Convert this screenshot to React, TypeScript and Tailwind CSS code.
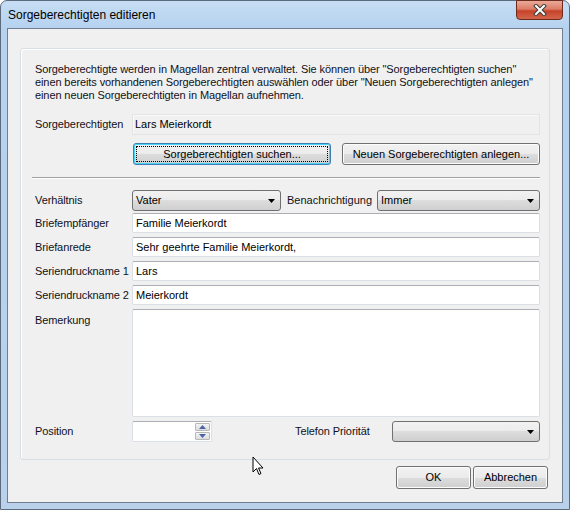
import React from 'react';

const font = { fontFamily: '"Liberation Sans", Arial, sans-serif' };

const Select: React.FC<{ value?: string; className?: string }> = ({ value, className = '' }) => (
  <div
    className={`relative h-[21px] flex items-center rounded-[3px] border border-[#707070] bg-[linear-gradient(to_bottom,#f2f2f2_0%,#ebebeb_50%,#dddddd_50%,#cfcfcf_100%)] pl-[3px] ${className}`}
  >
    <span className="text-[11px] text-black leading-none">{value}</span>
    <svg width="7" height="4" viewBox="0 0 7 4" className="absolute right-[5px] top-[8px]">
      <path d="M0 0h7L3.5 4z" fill="#000" />
    </svg>
  </div>
);

const TextBox: React.FC<{ value?: string; className?: string }> = ({ value, className = '' }) => (
  <div
    className={`h-[20px] flex items-center rounded-[2px] border border-[#dbdfe6] border-t-[#abadb3] bg-white pl-[3px] text-[11px] text-black ${className}`}
  >
    {value}
  </div>
);

const Button: React.FC<{ children: React.ReactNode; focused?: boolean; className?: string }> = ({
  children,
  focused,
  className = '',
}) => (
  <div
    className={`relative flex items-center justify-center rounded-[3px] border text-[11px] text-black bg-[linear-gradient(to_bottom,#f2f2f2_0%,#ebebeb_50%,#dddddd_50%,#cfcfcf_100%)] ${
      focused ? 'border-[#3c7fb1] shadow-[inset_0_0_0_1px_#48d2f9]' : 'border-[#707070] shadow-[inset_0_0_0_1px_#fcfcfc]'
    } ${className}`}
  >
    {focused && <span className="absolute inset-[2px] border border-dotted border-black" />}
    <span className="relative">{children}</span>
  </div>
);

const Label: React.FC<{ children: React.ReactNode; className?: string }> = ({ children, className = '' }) => (
  <div className={`w-[97px] shrink-0 text-[11px] text-[#101020] whitespace-nowrap tracking-[-0.1px] ${className}`}>{children}</div>
);

export default function App() {
  return (
    <div style={font} className="w-[570px] h-[510px] bg-white">
      <div className="relative w-[570px] h-[510px] rounded-t-[7px] border border-[#5b6b7d] bg-[linear-gradient(to_bottom,#c6ddf4_0px,#b6d2ef_28px,#b9d1ea_100%)] flex flex-col">
        {/* title bar */}
        <div className="h-[27px] flex items-center pl-[7px] text-[12px] text-black">Sorgeberechtigten editieren</div>
        <div className="absolute top-[-1px] right-[6px] w-[47px] h-[20px] rounded-b-[4px] border border-[#6e2a1d] bg-[linear-gradient(to_bottom,#e9aa99_0%,#dd7d66_45%,#c7432a_55%,#d2654a_100%)] flex items-center justify-center">
          <svg width="14" height="12" viewBox="0 0 14 12">
            <path d="M3 2l8 8M11 2l-8 8" stroke="#3b3b3b" strokeWidth="4" strokeLinecap="square" />
            <path d="M3 2l8 8M11 2l-8 8" stroke="#fff" strokeWidth="2" strokeLinecap="square" />
          </svg>
        </div>

        {/* client */}
        <div className="mx-[6px] h-[475px] border border-[#6f7f8f] bg-[#f0f0f0] flex flex-col pt-[19px] px-[12px]">
          <div className="h-[412px] rounded-[3px] border border-[#d5dfe5] shadow-[inset_1px_1px_0_#ffffff] flex flex-col pt-[14px] pl-[14px] pr-[9px]">
            <p className="text-[11px] leading-[13px] text-[#101020] whitespace-nowrap tracking-[-0.1px]">
              Sorgeberechtigte werden in Magellan zentral verwaltet. Sie können über "Sorgeberechtigten suchen"
              <br />
              einen bereits vorhandenen Sorgeberechtigten auswählen oder über "Neuen Sorgeberechtigten anlegen"
              <br />
              einen neuen Sorgeberechtigten in Magellan aufnehmen.
            </p>

            <div className="mt-[12px] flex items-center">
              <Label>Sorgeberechtigten</Label>
              <div className="flex-1 h-[21px] flex items-center border border-[#e3e3e3] shadow-[inset_1px_1px_0_#fafafa] pl-[2px] text-[11px] text-black">
                Lars Meierkordt
              </div>
            </div>

            <div className="mt-[8px] flex gap-[11px] pl-[98px]">
              <Button focused className="w-[198px] h-[22px]">Sorgeberechtigten suchen...</Button>
              <Button className="w-[198px] h-[22px]">Neuen Sorgeberechtigten anlegen...</Button>
            </div>

            <div className="mt-[12px] -ml-[3px] border-t border-[#a0a0a0] border-b border-b-white" />

            <div className="mt-[11px] flex items-center">
              <Label>Verhältnis</Label>
              <Select value="Vater" className="w-[149px]" />
              <div className="ml-[6px] w-[90px] text-[11px] text-[#101020]">Benachrichtigung</div>
              <Select value="Immer" className="flex-1" />
            </div>

            <div className="mt-[2px] flex flex-col gap-[4px]">
              {[
                ['Briefempfänger', 'Familie Meierkordt'],
                ['Briefanrede', 'Sehr geehrte Familie Meierkordt,'],
                ['Seriendruckname 1', 'Lars'],
                ['Seriendruckname 2', 'Meierkordt'],
              ].map(([l, v]) => (
                <div key={l} className="flex items-center">
                  <Label>{l}</Label>
                  <TextBox value={v} className="flex-1" />
                </div>
              ))}
              <div className="flex">
                <Label className="pt-[3px]">Bemerkung</Label>
                <div className="flex-1 h-[108px] rounded-[2px] border border-[#dbdfe6] border-t-[#abadb3] bg-white" />
              </div>
              <div className="flex items-center">
                <Label>Position</Label>
                <div className="w-[80px] h-[21px] flex rounded-[2px] border border-[#dbdfe6] border-t-[#abadb3] bg-white">
                  <div className="flex-1" />
                  <div className="w-[16px] flex flex-col gap-[1px] py-[1px] pr-[1px]">
                    {[0, 1].map((i) => (
                      <div
                        key={i}
                        className="flex-1 flex items-center justify-center rounded-[1px] border border-[#b8b8b8] bg-[linear-gradient(to_bottom,#f4f4f4,#dcdcdc)]"
                      >
                        <svg width="7" height="4" viewBox="0 0 7 4">
                          <path d={i === 0 ? 'M0 4h7L3.5 0z' : 'M0 0h7L3.5 4z'} fill="#4a64a8" />
                        </svg>
                      </div>
                    ))}
                  </div>
                </div>
                <div className="flex-1" />
                <Label>Telefon Priorität</Label>
                <Select className="w-[148px]" />
              </div>
            </div>
          </div>

          <div className="mt-[6px] flex justify-end gap-[2px] pr-[2px]">
            <Button className="w-[75px] h-[23px]">OK</Button>
            <Button className="w-[75px] h-[23px]">Abbrechen</Button>
          </div>
        </div>

        {/* mouse cursor */}
        <svg width="13" height="21" viewBox="0 0 13 21" className="absolute left-[251px] top-[455px]">
          <path d="M1 1v15l3.5-3.5 2.5 6 2-1-2.5-5.5H11z" fill="#fff" stroke="#000" strokeWidth="1" strokeLinejoin="round" />
        </svg>
      </div>
    </div>
  );
}
